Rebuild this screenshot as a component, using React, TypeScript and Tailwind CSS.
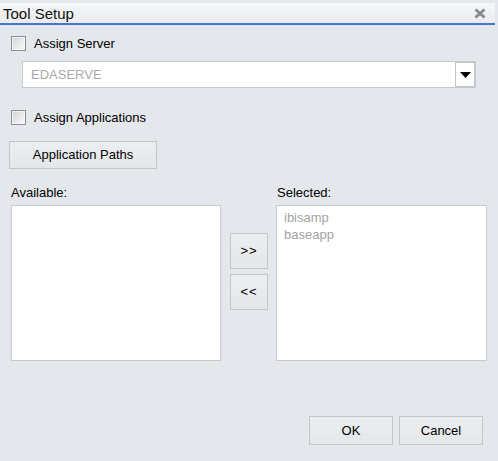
import React from "react";

const font = { fontFamily: '"Liberation Sans", Arial, sans-serif' };

function Checkbox({ label }: { label: string }) {
  return (
    <label className="flex items-center h-[15px] pl-[11px]">
      <span className="w-[15px] h-[15px] border border-[#8f8f8f] bg-gradient-to-br from-[#d4d4d4] to-[#fbfbfb] shadow-[inset_0_0_0_1px_#f4f4f4]" />
      <span className="ml-[8px] text-[13px] text-black leading-none">{label}</span>
    </label>
  );
}

function Btn({ children, className }: { children: React.ReactNode; className?: string }) {
  return (
    <button
      className={
        "border border-[#c5c6c8] bg-gradient-to-b from-[#eceef1] to-[#e4e7ea] text-[13px] text-black flex items-center justify-center " +
        (className ?? "")
      }
    >
      {children}
    </button>
  );
}

export default function App() {
  return (
    <div className="w-[498px] h-[461px] bg-[#e4e7eb] flex flex-col overflow-hidden" style={font}>
      {/* title bar */}
      <div className="mt-[3px] w-[495px] h-[22px] bg-gradient-to-b from-[#f5f6f7] to-[#eaecef] border-b-2 border-[#4677cf] flex items-center justify-between pl-[3px] pr-[9px]">
        <span className="text-[15px] text-[#111] leading-none">Tool Setup</span>
        <svg width="12" height="11" viewBox="0 0 12 11">
          <path d="M1.5 1.5 L10.5 9.5 M10.5 1.5 L1.5 9.5" stroke="#8a8a8a" strokeWidth="3" />
        </svg>
      </div>

      <div className="mt-[11px]">
        <Checkbox label="Assign Server" />
      </div>

      {/* server dropdown */}
      <div className="mt-[10px] ml-[22px] w-[454px] h-[27px] border border-[#c9cacc] bg-white flex items-center justify-between">
        <span className="pl-[8px] text-[13px] text-[#a9a9a9]">EDASERVE</span>
        <span className="w-[20px] h-[25px] border border-[#c4c4c4] bg-white flex items-center justify-center">
          <svg width="11" height="6" viewBox="0 0 11 6">
            <path d="M0 0 H11 L5.5 6 Z" fill="#000" />
          </svg>
        </span>
      </div>

      <div className="mt-[22px]">
        <Checkbox label="Assign Applications" />
      </div>

      <div className="mt-[16px] ml-[9px]">
        <Btn className="w-[148px] h-[28px]">Application Paths</Btn>
      </div>

      {/* lists */}
      <div className="mt-[17px] ml-[11px] flex">
        <div className="flex flex-col w-[210px]">
          <span className="text-[13px] text-black leading-none h-[14px]">Available:</span>
          <div className="mt-[5px] h-[156px] border border-[#c9cacc] bg-white" />
        </div>
        <div className="ml-[9px] w-[38px] flex flex-col pt-[47px] gap-[5px]">
          <Btn className="w-[38px] h-[36px] tracking-[1px]">&gt;&gt;</Btn>
          <Btn className="w-[38px] h-[36px] tracking-[1px]">&lt;&lt;</Btn>
        </div>
        <div className="ml-[8px] flex flex-col w-[211px]">
          <span className="pl-[1px] text-[13px] text-black leading-none h-[14px]">Selected:</span>
          <div className="mt-[5px] h-[156px] border border-[#c9cacc] bg-white pl-[7px] pt-[3px] text-[13px] text-[#a3a3a3] leading-[17px]">
            <div>ibisamp</div>
            <div>baseapp</div>
          </div>
        </div>
      </div>

      {/* footer buttons */}
      <div className="mt-[55px] flex justify-end pr-[15px] gap-[6px]">
        <Btn className="w-[84px] h-[29px]">OK</Btn>
        <Btn className="w-[84px] h-[29px]">Cancel</Btn>
      </div>
    </div>
  );
}
